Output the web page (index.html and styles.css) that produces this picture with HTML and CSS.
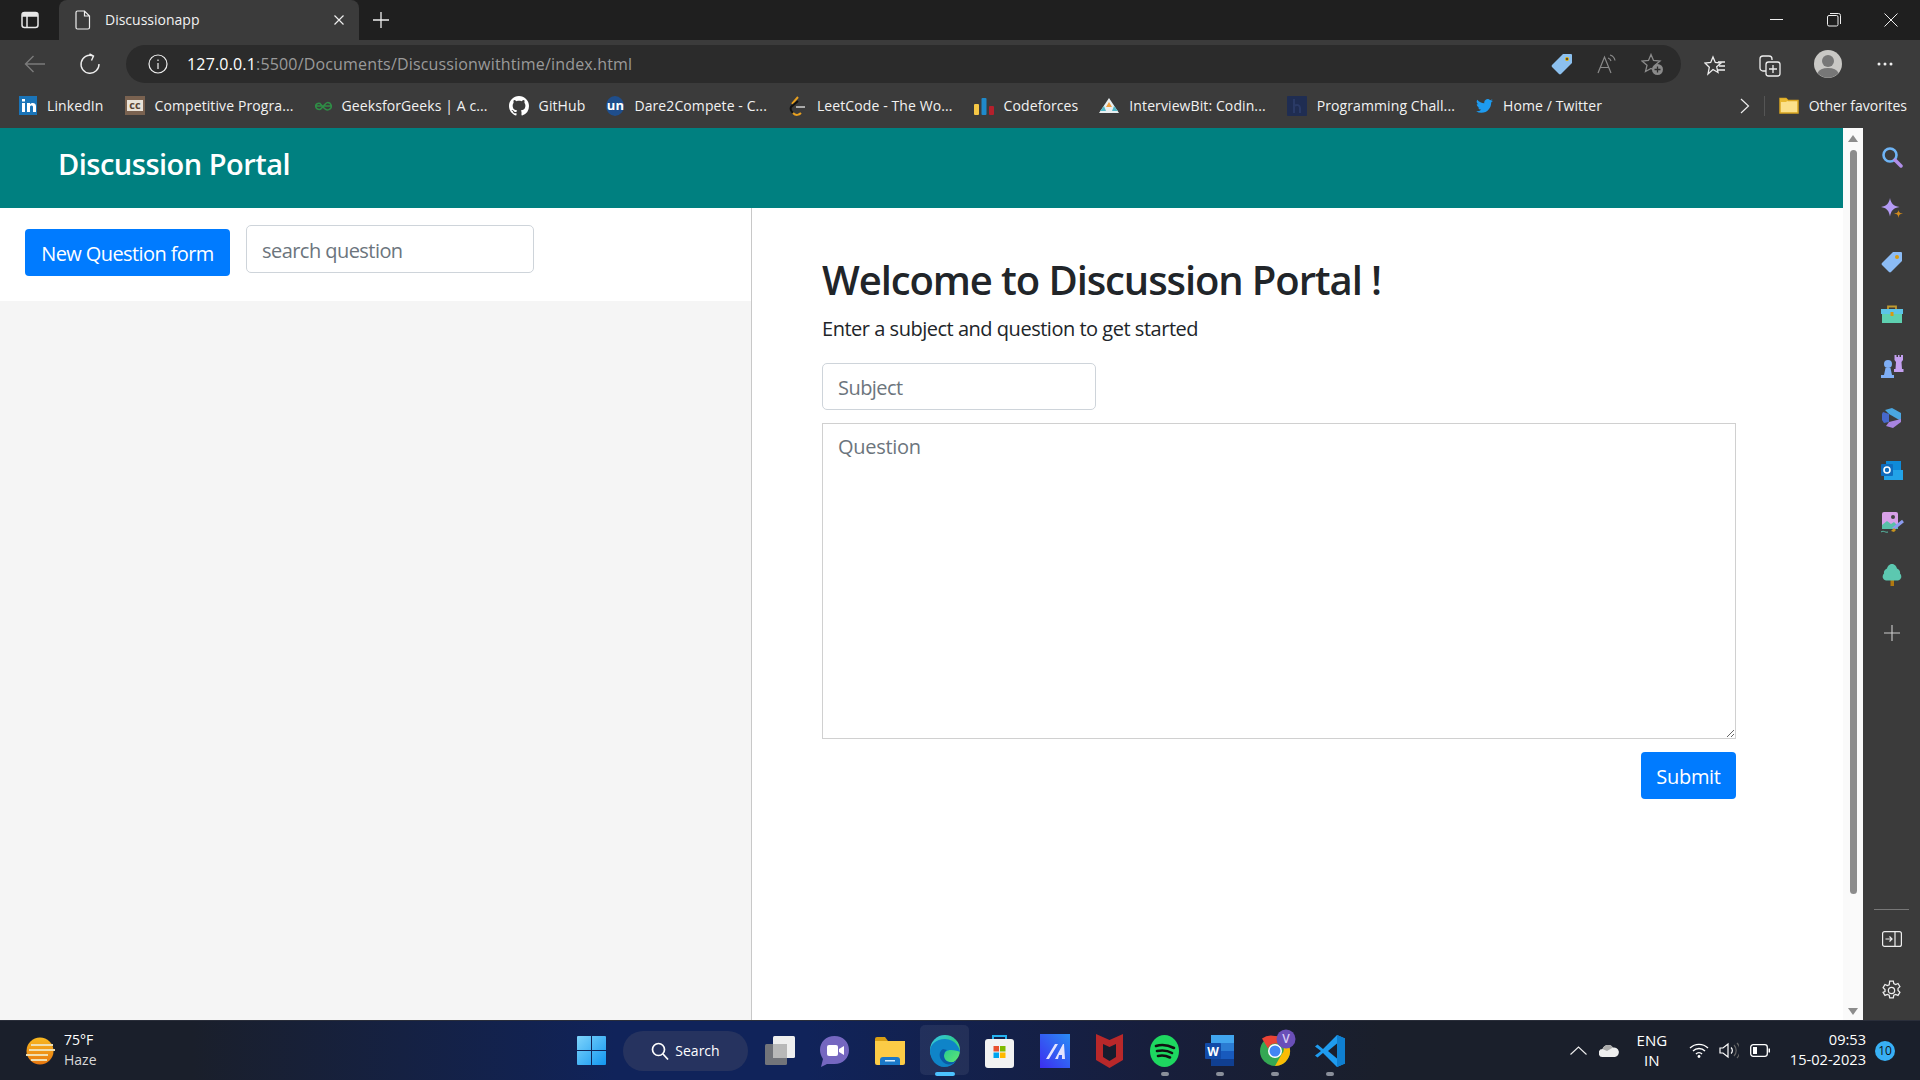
FILE: index.html
```html
<!DOCTYPE html>
<html lang="en">
<head>
    <meta charset="UTF-8">
    <title>Discussionapp</title>
    <link rel="stylesheet" href="styles.css">
</head>
<body>
<div class="screen">

    <!-- browser tabs -->
    <div class="titlebar">
        <div class="tab-toggle">
            <svg width="18" height="18" viewBox="0 0 18 18" fill="none" stroke="#e8e8e8" stroke-width="1.5"><rect x="1" y="1.5" width="16" height="15" rx="2.5"/><path d="M1 5h16M6 5v11" /><rect x="1.5" y="2" width="15" height="3" fill="#e8e8e8" stroke="none"/></svg>
        </div>
        <div class="tab">
            <svg width="16" height="20" viewBox="0 0 16 20" fill="none" stroke="#eee" stroke-width="1.2"><path d="M2.5 1h7l5 5v11.5a1.5 1.5 0 0 1-1.5 1.5H2.5A1.5 1.5 0 0 1 1 17.500V2.500A1.500 1.500 0 0 1 2.500 1zM9.500 1v5h5"/></svg>
            <span class="tab-title">Discussionapp</span>
            <svg class="tab-close" width="12" height="12" viewBox="0 0 12 12" stroke="#eee" stroke-width="1.200"><path d="M1.500 1.500l9 9M10.500 1.500l-9 9"/></svg>
        </div>
        <svg class="new-tab" width="18" height="18" viewBox="0 0 18 18" stroke="#eee" stroke-width="1.300"><path d="M9 1v16M1 9h16"/></svg>
        <div class="win-controls">
            <svg width="14" height="14" viewBox="0 0 14 14" stroke="#eee" stroke-width="1"><path d="M0 6.500h13"/></svg>
            <svg width="14" height="14" viewBox="0 0 14 14" fill="none" stroke="#eee" stroke-width="1"><rect x="0.500" y="2.500" width="10.500" height="10.500" rx="1.500"/><path d="M3 .5h8.500a2 2 0 0 1 2 2V11"/></svg>
            <svg width="14" height="14" viewBox="0 0 14 14" stroke="#eee" stroke-width="1"><path d="M.5.5l13 13M13.500.5l-13 13"/></svg>
        </div>
    </div>

    <!-- address bar -->
    <div class="toolbar">
        <svg class="tool-back" width="22" height="18" viewBox="0 0 22 18" fill="none" stroke="#7b7b7b" stroke-width="1.400"><path d="M21 9H1.500M9.500 1L1.500 9l8 8"/></svg>
        <svg class="tool-reload" width="22" height="22" viewBox="0 0 22 22" fill="none" stroke="#eee" stroke-width="1.400"><path d="M14 2.800A9 9 0 1 0 20 11"/><path d="M10.500 1l4 2-2 4.500"/></svg>
        <div class="address">
            <svg width="20" height="20" viewBox="0 0 20 20" fill="none" stroke="#eee" stroke-width="1.200"><circle cx="10" cy="10" r="9"/><path d="M10 9v6M10 5.500v1.500"/></svg>
            <span class="url"><span class="url-host">127.0.0.1</span>:5500/Documents/Discussionwithtime/index.html</span>
            <div class="address-icons">
                <svg width="22" height="22" viewBox="0 0 22 22"><path d="M12 1h8a1 1 0 0 1 1 1v8L10 21a1.500 1.500 0 0 1-2 0L1 14a1.500 1.500 0 0 1 0-2z" fill="#8cc0ee"/><circle cx="16" cy="6" r="2" fill="#e0a800"/><circle cx="16" cy="6" r="1" fill="#333"/></svg>
                <svg width="20" height="20" viewBox="0 0 20 20" fill="none" stroke="#8a8a8a" stroke-width="1.200"><path d="M1 19L7.500 3 14 19M3.500 13.500h8"/><path d="M11 4a4 4 0 0 1 3 3M13 1a7 7 0 0 1 5 5.500"/></svg>
                <svg width="22" height="22" viewBox="0 0 22 22" fill="none" stroke="#8a8a8a" stroke-width="1.300"><path d="M10 1.500l2.500 6 6.500.5-5 4.300 1.500 6.200L10 15.500 4.500 18.500 6 12.300 1 8l6.500-.5z"/><circle cx="16.500" cy="16.500" r="5.500" fill="#8a8a8a" stroke="none"/><path d="M16.500 13.500v6M13.500 16.500h6" stroke="#2b2b2b"/></svg>
            </div>
        </div>
        <svg class="tool-fav" width="22" height="22" viewBox="0 0 22 22" fill="none" stroke="#eee" stroke-width="1.300"><path d="M9 2l2.300 5.500 5.700.5-4.300 3.800 1.300 5.700L9 14.500 4 19l1.300-6.700L1 8l5.700-.5z"/><path d="M14 7h7M15 11h6M14 15h7"/></svg>
        <svg class="tool-coll" width="22" height="22" viewBox="0 0 22 22" fill="none" stroke="#eee" stroke-width="1.300"><path d="M7 16H4a3 3 0 0 1-3-3V4a3 3 0 0 1 3-3h6a3 3 0 0 1 3 3v1"/><rect x="7" y="7" width="14" height="14" rx="2.500"/><path d="M14 10v8M10 14h8"/></svg>
        <svg class="tool-profile" width="28" height="28" viewBox="0 0 28 28"><circle cx="14" cy="14" r="14" fill="#c9c8c5"/><circle cx="14" cy="11" r="6" fill="#777"/><path d="M3.500 23a11 7 0 0 1 21 0A14 14 0 0 1 3.500 23z" fill="#777"/></svg>
        <svg class="tool-more" width="16" height="4" viewBox="0 0 16 4" fill="#eee"><circle cx="2" cy="2" r="1.500"/><circle cx="8" cy="2" r="1.500"/><circle cx="14" cy="2" r="1.500"/></svg>
    </div>

    <!-- favorites bar -->
    <div class="bookmarks">
        <div class="bookmark">
            <svg width="18" height="19" viewBox="0 0 18 19"><rect width="18" height="19" fill="#1a74b8"/><path d="M3 7h3v9H3zM3 3h3v2.500H3zM8 7h3v1.200c1.500-2 6-2 6 2V16h-3v-5c0-2-3-2-3 0v5H8z" fill="#fff"/></svg>
            <span>LinkedIn</span>
        </div>
        <div class="bookmark">
            <svg width="20" height="19" viewBox="0 0 20 19"><rect width="20" height="19" fill="#7a6250"/><rect x="2" y="4" width="16" height="11" fill="#e9e2d8"/><text class="cc-mark" x="10" y="13" text-anchor="middle">cc</text></svg>
            <span>Competitive Progra...</span>
        </div>
        <div class="bookmark">
            <svg width="17" height="10" viewBox="0 0 17 10" fill="none" stroke="#2f8d46" stroke-width="1.500"><path d="M8.500 5H16.500a4 4 0 0 1-7 2.500C7 5 7 5 5 2.500A3.500 3.500 0 0 0 .5 5h8M8.500 5c-1 1-2.200 3.500-4 3.500S1 7 .5 5M8.500 5c1-1 2.500-3.500 4.300-3.500S16 3.500 16.500 5"/></svg>
            <span>GeeksforGeeks | A c...</span>
        </div>
        <div class="bookmark">
            <svg width="20" height="20" viewBox="0 0 16 16" fill="#fff"><path d="M8 0C3.580 0 0 3.580 0 8c0 3.540 2.290 6.530 5.470 7.590.4.070.55-.17.55-.38 0-.19-.01-.82-.01-1.490-2.010.37-2.530-.49-2.690-.94-.09-.23-.48-.94-.82-1.130-.28-.15-.68-.52-.01-.53.63-.01 1.080.58 1.230.82.720 1.210 1.870.870 2.330.660.070-.520.280-.870.510-1.070-1.780-.2-3.640-.890-3.640-3.950 0-.870.310-1.590.820-2.150-.080-.2-.360-1.020.080-2.120 0 0 .670-.210 2.200.820.640-.180 1.320-.270 2-.270.680 0 1.360.090 2 .270 1.530-1.040 2.200-.820 2.200-.820.440 1.100.160 1.920.080 2.120.510.560.820 1.270.820 2.150 0 3.070-1.870 3.750-3.650 3.950.290.250.540.730.540 1.480 0 1.070-.010 1.930-.010 2.200 0 .210.150.460.550.380A8.013 8.013 0 0 0 16 8c0-4.420-3.580-8-8-8z"/></svg>
            <span>GitHub</span>
        </div>
        <div class="bookmark">
            <div class="bookmark-un">un</div>
            <span>Dare2Compete - C...</span>
        </div>
        <div class="bookmark">
            <svg width="19" height="20" viewBox="0 0 19 20" fill="none" stroke-width="2"><path d="M10 1L4 8" stroke="#e8a020"/><path d="M10 5L3 11c-1 2 0 4 2 6" stroke="#111"/><path d="M5 17c3 3 6 2 8 0" stroke="#e8a020"/><path d="M8 11h9" stroke="#aaa"/></svg>
            <span>LeetCode - The Wo...</span>
        </div>
        <div class="bookmark">
            <svg width="20" height="20" viewBox="0 0 20 20"><rect y="8" width="5" height="11" rx="1" fill="#f6c745"/><rect x="7.500" y="2" width="5" height="17" rx="1" fill="#1f8acb"/><rect x="15" y="10" width="5" height="9" rx="1" fill="#b5202c"/></svg>
            <span>Codeforces</span>
        </div>
        <div class="bookmark">
            <svg width="20" height="15" viewBox="0 0 20 15"><path d="M10 0L20 15H0z" fill="#e8eef0"/><path d="M10 4l3 5H7z" fill="#f0a040"/><path d="M2 12l3-4 2 5H1zM18 12l-3-4-2 5h6z" fill="#4fb8c8"/></svg>
            <span>InterviewBit: Codin...</span>
        </div>
        <div class="bookmark">
            <svg width="20" height="20" viewBox="0 0 20 20"><rect width="20" height="20" rx="1" fill="#1f2d52"/><path d="M7 3v14M7 10c3-2 6-1 6 2v5" stroke="#2a3a66" stroke-width="2" fill="none"/></svg>
            <span>Programming Chall...</span>
        </div>
        <div class="bookmark">
            <svg width="17" height="14" viewBox="0 0 24 20" fill="#1d9bf0"><path d="M24 2.400a10 10 0 0 1-2.800.8A5 5 0 0 0 23.300.5a10 10 0 0 1-3.100 1.200 4.900 4.900 0 0 0-8.400 4.500A14 14 0 0 1 1.700 1a4.900 4.900 0 0 0 1.500 6.600 5 5 0 0 1-2.200-.6v.1a4.900 4.900 0 0 0 3.900 4.800 5 5 0 0 1-2.200.1 5 5 0 0 0 4.600 3.400A9.900 9.900 0 0 1 0 17.500 14 14 0 0 0 7.500 19.700c9.100 0 14-7.500 14-14v-.6A10 10 0 0 0 24 2.400z"/></svg>
            <span>Home / Twitter</span>
        </div>
        <svg class="bookmarks-more" width="10" height="16" viewBox="0 0 10 16" fill="none" stroke="#eee" stroke-width="1.200"><path d="M1 1l7.500 7L1 15"/></svg>
        <div class="bookmarks-sep"></div>
        <div class="bookmark bookmark-other">
            <svg width="20" height="17" viewBox="0 0 20 17"><path d="M1 1.500h6l2 2h10v12.500H1z" fill="#fbe08a" stroke="#d9a520" stroke-width="1.500"/><path d="M1 1.500h6l2 2-2 1.500H1z" fill="#e8b830"/></svg>
            <span>Other favorites</span>
        </div>
    </div>

    <div class="viewport">
        <div class="page">
            <div class="site-header">
                <h2>Discussion Portal</h2>
            </div>
            <div class="content">
                <div class="left-panel">
                    <div class="left-actions">
                        <button class="btn new-question" type="button">New Question form</button>
                        <input class="field search-field" type="text" placeholder="search question">
                    </div>
                </div>
                <div class="right-panel">
                    <h1>Welcome to Discussion Portal !</h1>
                    <p class="lead">Enter a subject and question to get started</p>
                    <input class="field subject-field" type="text" placeholder="Subject">
                    <textarea class="question-field" placeholder="Question"></textarea>
                    <div class="submit-row">
                        <button class="btn" type="button">Submit</button>
                    </div>
                </div>
            </div>
        </div>

        <div class="scrollbar">
            <div class="arrow-up"></div>
            <div class="thumb"></div>
            <div class="arrow-down"></div>
        </div>

        <!-- edge sidebar -->
        <div class="sidebar">
            <div class="side-item"><svg width="22" height="22" viewBox="0 0 22 22" fill="none"><circle cx="9" cy="9" r="6.500" stroke="#6fb4f5" stroke-width="2.600"/><path d="M14 14l6 6" stroke="#b08ee8" stroke-width="3.500" stroke-linecap="round"/></svg></div>
            <div class="side-item"><svg width="22" height="22" viewBox="0 0 22 22"><path d="M9 0c1 5.500 3.500 8 9.500 9-6 1-8.500 3.500-9.500 9.500C8 12.500 5.500 10 0 9c5.500-1 8-3.500 9-9z" fill="#b49bf5"/><path d="M17.500 12c.4 2.400 1.200 3.200 4.500 3.500-3.300.5-4.100 1.300-4.500 4.500-.4-3.200-1.200-4-4.500-4.500 3.300-.3 4.100-1.100 4.500-3.500z" fill="#d08a1c"/></svg></div>
            <div class="side-item"><svg width="22" height="22" viewBox="0 0 22 22"><path d="M12 1h8a1 1 0 0 1 1 1v8L10 21a1.500 1.500 0 0 1-2 0L1 14a1.500 1.500 0 0 1 0-2z" fill="#8cbcf5"/><circle cx="16" cy="6" r="2" fill="#d89a10"/></svg></div>
            <div class="side-item"><svg width="22" height="20" viewBox="0 0 22 20"><path d="M7 6V2.500h8V6" fill="none" stroke="#c09a30" stroke-width="1.800"/><rect y="5" width="22" height="5" fill="#5cc4e8"/><rect x="1" y="10" width="20" height="9" fill="#5ed0b0"/><rect x="9.500" y="8" width="3" height="4" fill="#d89a10"/></svg></div>
            <div class="side-item"><svg width="24" height="24" viewBox="0 0 24 24"><path d="M15 1h1.500v2H18V1h1.500v2H21V1h2v5l-1.500 2 .5 7h1.500v3H14v-3h1.500l.5-7L14.500 6V1z" fill="#c4a0f0"/><circle cx="8" cy="10" r="4" fill="#7eaef5"/><path d="M5.500 14h5l1.500 7h2v3H1v-3h3z" fill="#7eaef5"/></svg></div>
            <div class="side-item"><svg width="22" height="22" viewBox="0 0 22 22"><path d="M4 3l7-2 9 5v8L8 7z" fill="#4aa6e0"/><path d="M2 5l6 2v8l-5 1-2-3V7z" fill="#4668cc"/><path d="M8 15l12-3v3l-8 6-7-2z" fill="#a884e0"/></svg></div>
            <div class="side-item"><svg width="22" height="20" viewBox="0 0 22 20"><rect x="5" y="0" width="15" height="10" fill="#0f8ad8"/><rect x="3" y="9" width="19" height="10" fill="#22a3e8"/><rect y="3" width="12" height="12" rx="1" fill="#0f6cbd"/><circle cx="6" cy="9" r="3" fill="none" stroke="#fff" stroke-width="1.600"/></svg></div>
            <div class="side-item"><svg width="24" height="24" viewBox="0 0 24 24"><rect x="2" y="1" width="16" height="17" rx="2" fill="#d8a0e8"/><path d="M2 14l5-4 4 3 3-2 4 4v3H2z" fill="#58c0a8"/><circle cx="13" cy="6" r="2" fill="#444"/><path d="M23 10L13 18" stroke="#8c9cf0" stroke-width="3"/><path d="M14 17l-3 3 3 1 2-2z" fill="#c8941c"/><path d="M1 21c3-2 4 1 7 0" stroke="#58c0a8" fill="none"/></svg></div>
            <div class="side-item"><svg width="20" height="22" viewBox="0 0 20 22"><rect x="8.500" y="15" width="3.500" height="7" fill="#b07810"/><path d="M10 0c3 0 4.500 2.500 5 4.500 2.500 1 3.500 3 3 5 2 2 2 6-2 7H4c-4-1-4-5-2-7-.5-2 .5-4 3-5C5.500 2.500 7 0 10 0z" fill="#5cc8b0"/></svg></div>
            <div class="side-item side-plus"><svg width="16" height="16" viewBox="0 0 16 16" stroke="#ccc" stroke-width="1.100"><path d="M8 0v16M0 8h16"/></svg></div>
            <div class="side-bottom">
                <div class="side-sep"></div>
                <div class="side-item"><svg width="20" height="16" viewBox="0 0 20 16" fill="none" stroke="#eee" stroke-width="1.200"><rect x=".6" y=".6" width="18.800" height="14.800" rx="2"/><path d="M13 .6v14.800M3.500 8h6.500M7.500 5.500L10 8l-2.500 2.500"/></svg></div>
                <div class="side-item"><svg width="21" height="21" viewBox="0 0 20 20" fill="none" stroke="#eee" stroke-width="1.200"><circle cx="10" cy="10" r="3"/><path d="M8.300 1h3.400l.5 2.500 1.700.8 2.300-1 1.800 3-1.800 1.700v2l1.800 1.700-1.800 3-2.300-1-1.700.8-.5 2.500H8.300l-.5-2.500-1.700-.8-2.300 1-1.800-3L3.800 11V9L2 7.300l1.800-3 2.300 1 1.700-.8z"/></svg></div>
            </div>
        </div>
    </div>

    <!-- windows taskbar -->
    <div class="taskbar">
        <div class="weather">
            <svg width="30" height="30" viewBox="0 0 30 30"><defs><linearGradient id="sunfill" x1="0" y1="0" x2="0" y2="1"><stop offset="0" stop-color="#f8b820"/><stop offset="1" stop-color="#e87810"/></linearGradient></defs><circle cx="15" cy="15" r="13.500" fill="url(#sunfill)"/><path d="M6 9h22M4 14h26M1 19h22M6 24h16" stroke="#f0dfb0" stroke-width="2"/></svg>
            <div class="weather-text">
                <div>75°F</div>
                <div class="weather-sub">Haze</div>
            </div>
        </div>
        <div class="task-icons">
            <div class="task-slot">
                <svg width="29" height="29" viewBox="0 0 29 29"><defs><linearGradient id="startfill" x1="0" y1="0" x2="1" y2="1"><stop offset="0" stop-color="#7ed4fb"/><stop offset="1" stop-color="#1296f0"/></linearGradient></defs><path d="M0 1a1 1 0 0 1 1-1h13v14H0zM15 0h13a1 1 0 0 1 1 1v13H15zM0 15h14v14H1a1 1 0 0 1-1-1zM15 15h14v13a1 1 0 0 1-1 1H15z" fill="url(#startfill)"/></svg>
            </div>
            <div class="task-search">
                <svg width="18" height="18" viewBox="0 0 18 18" fill="none" stroke="#fff" stroke-width="1.700"><circle cx="7.500" cy="7.500" r="6"/><path d="M12 12l5 5.500"/></svg>
                <span>Search</span>
            </div>
            <div class="task-slot">
                <svg width="30" height="29" viewBox="0 0 30 29"><rect x="8" y="0" width="22" height="22" rx="1.500" fill="#eee"/><rect x="0" y="8" width="22" height="21" rx="1.500" fill="#7d7d7d" opacity=".9"/><rect x="8" y="8" width="14" height="14" fill="#b8b8b8"/></svg>
            </div>
            <div class="task-slot">
                <svg width="29" height="32" viewBox="0 0 29 32"><path d="M14.500 1C23 1 29 7 29 15s-6 14-14.500 14H7l-6 3 2-8C1 21 0 18 0 15 0 7 6 1 14.500 1z" fill="#7567c0"/><rect x="7" y="10" width="11" height="11" rx="2" fill="#fff"/><path d="M19 14l5-3v9l-5-3z" fill="#fff"/></svg>
            </div>
            <div class="task-slot">
                <svg width="30" height="28" viewBox="0 0 30 28"><path d="M0 2a2 2 0 0 1 2-2h8l3 4H0z" fill="#d89e14"/><path d="M0 4h30v22a2 2 0 0 1-2 2H2a2 2 0 0 1-2-2z" fill="#fccb46"/><path d="M5 28v-5a3 3 0 0 1 3-3h14a3 3 0 0 1 3 3v5z" fill="#1a78c8"/><rect x="10" y="23" width="10" height="1.500" fill="#d4ecff"/></svg>
            </div>
            <div class="task-slot task-slot-active">
                <svg width="30" height="32" viewBox="0 0 30 32"><defs><linearGradient id="edgefill" x1="0" y1="0" x2="1" y2="1"><stop offset="0" stop-color="#35c1f1"/><stop offset=".5" stop-color="#2ecc8e"/><stop offset="1" stop-color="#66eb6e"/></linearGradient></defs><circle cx="15" cy="15" r="15" fill="url(#edgefill)"/><path d="M15 4C6 4 0 10 0 16c0 9 7 16 14 16 5 0 9-2 12-6-6 3-12 0-12-5 0-4 3-6 7-6 4 0 7 1 9 2 0-4-5-13-15-13z" fill="#0f84c8"/><path d="M13 14c-4 2-5 8 0 13 3 3 8 4 13-1-6 3-12 0-12-5 0-3 1-5 3-6z" fill="#0c5aa6"/></svg>
                <div class="task-line"></div>
            </div>
            <div class="task-slot">
                <svg width="29" height="34" viewBox="0 0 29 34"><path d="M8 6V2h13v4" fill="none" stroke="#26b3f0" stroke-width="2"/><rect y="5" width="29" height="29" rx="3" fill="#f2f2f2"/><rect x="8.500" y="12" width="5.500" height="5.500" fill="#e8502e"/><rect x="15" y="12" width="5.500" height="5.500" fill="#7fba00"/><rect x="8.500" y="18.500" width="5.500" height="5.500" fill="#00a4ef"/><rect x="15" y="18.500" width="5.500" height="5.500" fill="#ffb900"/></svg>
            </div>
            <div class="task-slot">
                <svg width="30" height="34" viewBox="0 0 30 34"><defs><linearGradient id="appfill" x1="0" y1="1" x2="1" y2="0"><stop offset="0" stop-color="#3c2df0"/><stop offset="1" stop-color="#2a8cf5"/></linearGradient></defs><rect width="30" height="34" fill="url(#appfill)"/><path d="M6 25L15 10h3L9 25zM15 25l8-15h1l1 15h-3v-4h-3l-1 4z" fill="#e4e4ff"/></svg>
            </div>
            <div class="task-slot">
                <svg width="27" height="34" viewBox="0 0 27 34"><path d="M0 0l13.500 6L27 0v26l-13.500 8L0 26z" fill="#b8282a"/><path d="M7 10l6.500 3L20 10v13l-6.500 4L7 23z" fill="#161c2e"/></svg>
            </div>
            <div class="task-slot">
                <svg width="29" height="32" viewBox="0 0 29 32" fill="none"><ellipse cx="14.500" cy="16" rx="14.500" ry="16" fill="#1ed760"/><path d="M6 11c6-2 12-1 18 2M7 16c5-1 10-1 15 2M8 21c4-1 8-.5 12 1.500" stroke="#111" stroke-width="2.600" stroke-linecap="round"/></svg>
                <div class="task-dot"></div>
            </div>
            <div class="task-slot">
                <svg width="29" height="31" viewBox="0 0 29 31"><rect x="6" y="0" width="23" height="8" fill="#41a5ee"/><rect x="6" y="8" width="23" height="8" fill="#2b7cd3"/><rect x="6" y="16" width="23" height="8" fill="#185abd"/><rect x="6" y="24" width="23" height="7" fill="#103f91"/><rect x="0" y="8" width="16" height="16" rx="1" fill="#124ba8"/><text class="word-w" x="8" y="20.500" text-anchor="middle">W</text></svg>
                <div class="task-dot"></div>
            </div>
            <div class="task-slot">
                <svg class="chrome-icon" width="37" height="38" viewBox="0 0 37 38"><circle cx="15" cy="23" r="15" fill="#34a853"/><path d="M15 8a15 15 0 0 1 13 7.500H15a7.500 7.500 0 0 0-7 5L2 10.500A15 15 0 0 1 15 8z" fill="#ea4335"/><path d="M28 15.500A15 15 0 0 1 15 38l6.500-11.500a7.500 7.500 0 0 0 0-11z" fill="#fbbc05"/><circle cx="15" cy="23" r="7" fill="#fff"/><circle cx="15" cy="23" r="5.500" fill="#4285f4"/><circle cx="26" cy="11" r="9.500" fill="#6a4fb8"/><text class="chrome-v" x="26" y="15" text-anchor="middle">V</text></svg>
                <div class="task-dot"></div>
            </div>
            <div class="task-slot">
                <svg width="30" height="32" viewBox="0 0 30 32"><path d="M22 0l8 3.500v25L22 32 8 18l-5.500 4.500L0 20.500 6 16 0 11.500 2.500 9.500 8 14z" fill="#1f9cf0"/><path d="M22 8.500L13 16l9 7.500z" fill="#1a1f2e"/><path d="M22 0l8 3.500v25L22 32z" fill="#0f7fd0"/></svg>
                <div class="task-dot"></div>
            </div>
        </div>
        <div class="tray">
            <svg class="tray-chevron" width="17" height="9" viewBox="0 0 17 9" fill="none" stroke="#eee" stroke-width="1.100"><path d="M.5 8.500L8.500 1l8 7.500"/></svg>
            <svg class="tray-cloud" width="20" height="13" viewBox="0 0 20 13"><path d="M4 13a4 4 0 0 1-.5-8A6 6 0 0 1 14 3.500 4.500 4.500 0 0 1 16 13z" fill="#eee"/><path d="M3.500 5A6 6 0 0 1 14 3.500L8 7z" fill="#aaa"/></svg>
            <div class="tray-lang">
                <div>ENG</div>
                <div>IN</div>
            </div>
            <svg class="tray-wifi" width="20" height="15" viewBox="0 0 20 15" fill="none" stroke="#fff" stroke-width="1.400"><path d="M1 5a13 13 0 0 1 18 0M4 8a8.500 8.500 0 0 1 12 0M7 11a4 4 0 0 1 6 0"/><circle cx="10" cy="13.500" r="1.400" fill="#fff" stroke="none"/></svg>
            <svg class="tray-sound" width="20" height="17" viewBox="0 0 20 17" fill="none" stroke="#fff" stroke-width="1.200"><path d="M1 6v5h3l5 4V2L4 6z"/><path d="M12 5.500a4 4 0 0 1 0 6"/><path d="M15 3a8 8 0 0 1 0 11M18 1a11 11 0 0 1 0 15" stroke="#666"/></svg>
            <svg class="tray-battery" width="20" height="13" viewBox="0 0 20 13" fill="none" stroke="#fff" stroke-width="1.300"><rect x=".7" y=".7" width="16.600" height="11.600" rx="2.500"/><rect x="3" y="3" width="4" height="7" fill="#fff" stroke="none"/><rect x="18.500" y="4.500" width="1.500" height="4" fill="#fff" stroke="none"/></svg>
            <div class="tray-clock">
                <div>09:53</div>
                <div>15-02-2023</div>
            </div>
            <div class="tray-badge">10</div>
        </div>
    </div>

</div>
</body>
</html>
```

FILE: styles.css
```css
/* General Styles */
* {
    box-sizing: border-box;
}

body {
    margin: 0;
    padding: 0;
    font-family: "Open Sans", "Noto Sans", sans-serif;
    color: #212529;
    overflow: hidden;
}

svg {
    display: block;
    flex: none;
}

.screen {
    width: 1920px;
    height: 1080px;
    display: flex;
    flex-direction: column;
    overflow: hidden;
}

/* Tabs */
.titlebar {
    height: 40px;
    flex: none;
    background-color: #1f1f1f;
    display: flex;
    align-items: center;
}

.tab-toggle {
    width: 59px;
    padding-left: 21px;
}

.tab {
    width: 300px;
    height: 40px;
    background-color: #3b3b3b;
    border-radius: 8px 8px 0 0;
    display: flex;
    align-items: center;
    padding-left: 16px;
    padding-bottom: 1px;
    color: #f2f2f2;
    font-size: 14px;
}

.tab-title {
    margin-left: 14px;
}

.tab-close {
    margin-left: auto;
    margin-right: 14px;
}

.new-tab {
    margin-left: 13px;
}

.win-controls {
    margin-left: auto;
    display: flex;
    gap: 43px;
    padding-right: 22px;
}

/* Address bar */
.toolbar {
    height: 43px;
    flex: none;
    background-color: #3b3b3b;
    display: flex;
    align-items: flex-start;
    padding-top: 5px;
}

.toolbar > svg {
    margin-top: 10px;
}

.tool-back {
    margin-left: 24px;
}

.tool-reload {
    margin-left: 33px;
    margin-top: 8px !important;
}

.address {
    width: 1555px;
    height: 38px;
    margin-left: 25px;
    background-color: #2b2b2b;
    border-radius: 19px;
    display: flex;
    align-items: center;
    padding-left: 22px;
    padding-right: 18px;
    font-size: 16px;
    color: #9a9a9a;
}

.url {
    margin-left: 19px;
    letter-spacing: 0.17px;
}

.url-host {
    color: #fff;
}

.address-icons {
    margin-left: auto;
    display: flex;
    align-items: center;
    gap: 24px;
}

.tool-fav {
    margin-left: 23px;
}

.tool-coll {
    margin-left: 33px;
}

.tool-profile {
    margin-left: 33px;
    margin-top: 5px !important;
}

.tool-more {
    margin-left: 35px;
    margin-top: 17px !important;
}

/* Favorites bar */
.bookmarks {
    height: 45px;
    flex: none;
    background-color: #3b3b3b;
    display: flex;
    align-items: center;
    padding-left: 19px;
    gap: 21px;
    color: #f2f2f2;
    font-size: 14px;
    letter-spacing: 0.1px;
    white-space: nowrap;
}

.bookmark {
    display: flex;
    align-items: center;
    gap: 10px;
}

.cc-mark {
    font-size: 11px;
    font-weight: 700;
    fill: #5a4636;
}

.bookmark-un {
    width: 18px;
    height: 20px;
    border-radius: 50%;
    background-color: #1f4e8c;
    color: #fff;
    font-size: 13px;
    font-weight: 700;
    line-height: 18px;
    text-align: center;
}

.bookmarks-more {
    margin-left: auto;
    margin-right: -7px;
}

.bookmarks-sep {
    width: 1px;
    height: 20px;
    background-color: #555;
}

.bookmark-other {
    margin-left: -7px;
    margin-right: 13px;
    letter-spacing: 0;
}

/* Page */
.viewport {
    flex: 1;
    min-height: 0;
    display: flex;
}

.page {
    flex: 1;
    background-color: #fff;
    display: flex;
    flex-direction: column;
}

.site-header {
    height: 80px;
    flex: none;
    background-color: #008080;
    color: #fff;
    padding-left: 58px;
}

.site-header h2 {
    margin: 0;
    padding-top: 15px;
    font-size: 29px;
    font-weight: 600;
    line-height: 42px;
    letter-spacing: -0.5px;
}

.content {
    flex: 1;
    display: flex;
}

.left-panel {
    width: 752px;
    flex: none;
    background-color: #f5f5f5;
    border-right: 1px solid #c8c8c8;
}

.left-actions {
    height: 93px;
    background-color: #fff;
    display: flex;
    align-items: flex-start;
    padding: 17px 0 0 25px;
    gap: 16px;
}

.btn {
    font-family: inherit;
    font-size: 20px;
    line-height: 30px;
    letter-spacing: -0.3px;
    padding: 8px 16px;
    height: 47px;
    color: #fff;
    background-color: #007bff;
    border: none;
    border-radius: 4px;
}

.new-question {
    margin-top: 4px;
    width: 205px;
    padding: 9px 0 7px;
    letter-spacing: -0.6px;
}

.field {
    font-family: inherit;
    font-size: 20px;
    letter-spacing: -0.55px;
    padding: 9px 15px 7px;
    border: 1px solid #ced4da;
    border-radius: 5px;
    color: #495057;
}

.field::placeholder,
.question-field::placeholder {
    color: #6c757d;
}

.search-field {
    width: 288px;
    height: 48px;
    padding-top: 10px;
}

.right-panel {
    flex: 1;
    padding: 44px 0 0 70px;
}

h1 {
    margin: 0;
    font-size: 40px;
    font-weight: 600;
    line-height: 56px;
    letter-spacing: -1.1px;
}

.lead {
    margin: 6px 0 0;
    font-size: 20px;
    line-height: 30px;
    letter-spacing: -0.48px;
}

.subject-field {
    display: block;
    width: 274px;
    height: 47px;
    margin-top: 19px;
}

.question-field {
    display: block;
    width: 914px;
    height: 316px;
    margin-top: 13px;
    padding: 8px 15px;
    font-family: inherit;
    font-size: 20px;
    line-height: 30px;
    letter-spacing: -0.3px;
    border: 1px solid #d0d0d0;
    border-radius: 0;
}

.submit-row {
    width: 914px;
    margin-top: 13px;
    display: flex;
    justify-content: flex-end;
}

.submit-row .btn {
    width: 95px;
    padding: 9px 0 7px;
}

/* Scrollbar */
.scrollbar {
    width: 20px;
    flex: none;
    background-color: #fafafa;
    display: flex;
    flex-direction: column;
    align-items: center;
    padding-top: 7px;
    padding-bottom: 5px;
}

.thumb {
    width: 7px;
    flex: 1;
    margin: 8px 0 114px;
    border-radius: 4px;
    background-color: #8c8c8c;
}

.arrow-up,
.arrow-down {
    width: 0;
    height: 0;
    border-left: 5px solid transparent;
    border-right: 5px solid transparent;
}

.arrow-up {
    border-bottom: 7px solid #8c8c8c;
}

.arrow-down {
    border-top: 7px solid #8c8c8c;
}

/* Sidebar */
.sidebar {
    width: 57px;
    flex: none;
    background-color: #3b3b3b;
    display: flex;
    flex-direction: column;
    align-items: center;
    padding-top: 3px;
}

.side-item {
    height: 52.25px;
    flex: none;
    display: flex;
    align-items: center;
    justify-content: center;
}

.side-plus {
    margin-top: 6px;
}

.side-bottom {
    margin-top: auto;
    display: flex;
    flex-direction: column;
    align-items: center;
    padding-bottom: 3px;
}

.side-sep {
    width: 35px;
    height: 1px;
    background-color: #777;
    margin-bottom: 3px;
}

/* Taskbar */
.taskbar {
    height: 60px;
    flex: none;
    background: linear-gradient(90deg, #1a1f2b 0%, #1a1f2b 10%, #10235a 32%, #10235a 42%, #171e3c 60%, #1a1f2b 72%, #1a1f2b 100%);
    border-top: 1px solid #2a2e3a;
    display: flex;
    align-items: center;
    color: #fff;
    font-size: 14px;
}

.weather {
    width: 564px;
    flex: none;
    display: flex;
    align-items: center;
    gap: 9px;
    padding-left: 25px;
}

.weather-text {
    font-size: 14px;
    line-height: 20px;
    padding-bottom: 1px;
}

.weather-sub {
    color: #d8d8d8;
}

.task-icons {
    display: flex;
    align-items: center;
    height: 100%;
}

.task-slot {
    width: 55px;
    height: 100%;
    display: flex;
    align-items: center;
    justify-content: center;
    position: relative;
}

.task-slot-active::before {
    content: "";
    position: absolute;
    left: 3px;
    right: 3px;
    top: 4px;
    bottom: 5px;
    background-color: rgba(255, 255, 255, 0.07);
    border-radius: 5px;
}

.task-slot svg {
    position: relative;
}

.task-slot .chrome-icon {
    margin-left: 7px;
    margin-bottom: 8px;
}

.task-search {
    width: 125px;
    height: 40px;
    margin: 0 4px;
    border-radius: 20px;
    background-color: #26335f;
    display: flex;
    align-items: center;
    justify-content: center;
    gap: 6px;
    font-size: 14px;
}

.task-line,
.task-dot {
    position: absolute;
    bottom: 4px;
    left: 50%;
    height: 4px;
    border-radius: 2px;
    transform: translateX(-50%);
}

.task-line {
    width: 20px;
    background-color: #4cc2ff;
}

.task-dot {
    width: 8px;
    background-color: #8a8f9a;
}

.word-w {
    font-family: "Open Sans", sans-serif;
    font-size: 12px;
    font-weight: 700;
    fill: #fff;
}

.chrome-v {
    font-family: "Open Sans", sans-serif;
    font-size: 12px;
    font-weight: 600;
    fill: #d8ccf5;
}

.tray {
    margin-left: auto;
    display: flex;
    align-items: center;
    padding-right: 25px;
    height: 100%;
    font-size: 15px;
}

.tray-cloud {
    margin-left: 12px;
}

.tray-lang {
    width: 40px;
    margin-left: 13px;
    text-align: center;
    line-height: 20px;
    padding-bottom: 2px;
}

.tray-wifi {
    margin-left: 17px;
}

.tray-sound {
    margin-left: 10px;
}

.tray-battery {
    margin-left: 11px;
}

.tray-clock {
    margin-left: 20px;
    font-size: 14.6px;
    text-align: right;
    line-height: 20px;
    white-space: nowrap;
    padding-bottom: 3px;
}

.tray-badge {
    width: 20px;
    height: 20px;
    margin-left: 9px;
    border-radius: 50%;
    background-color: #38b0f5;
    color: #111;
    font-size: 12px;
    line-height: 20px;
    text-align: center;
}
```
